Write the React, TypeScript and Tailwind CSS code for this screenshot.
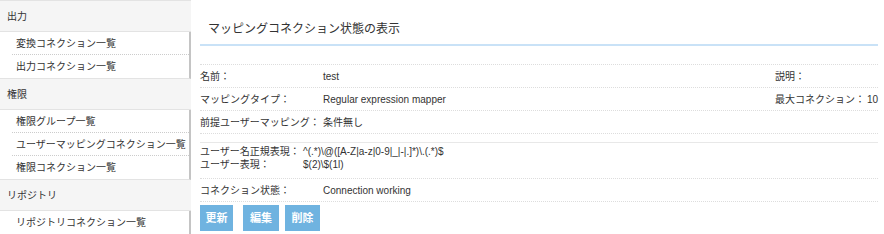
const font = { fontFamily: '"Liberation Sans", "Noto Sans CJK JP", sans-serif' };

const groups = [
    { title: '出力', items: ['変換コネクション一覧', '出力コネクション一覧'] },
    { title: '権限', items: ['権限グループ一覧', 'ユーザーマッピングコネクション一覧', '権限コネクション一覧'] },
    { title: 'リポジトリ', items: ['リポジトリコネクション一覧'] },
];

function Sidebar() {
    return (
        <div className="w-[191px] shrink-0 border-t border-[#e3e3e3]">
            {groups.map((g) => (
                <div key={g.title}>
                    <div className="flex h-[31px] items-center border-b border-[#e3e3e3] bg-[#f5f5f5] pl-[7px] text-[10px] text-[#333]">
                        {g.title}
                    </div>
                    <ul className="border-r-2 border-b border-r-[#c4c4c4] border-b-[#e3e3e3] bg-white pl-[12px]">
                        {g.items.map((it, i) => (
                            <li
                                key={it}
                                className={`flex h-[23px] items-center whitespace-nowrap pl-[4px] text-[10px] text-[#333] ${
                                    i < g.items.length - 1 ? 'border-b border-dotted border-[#ccc]' : ''
                                }`}
                            >
                                {it}
                            </li>
                        ))}
                    </ul>
                </div>
            ))}
        </div>
    );
}

function Row({ label, value, right, rightValue, labelW = 'w-[123px]' }: any) {
    return (
        <div className="flex h-[23px] items-center whitespace-nowrap border-t border-dotted border-[#ddd] text-[10px] text-[#333]">
            <div className={`${labelW} shrink-0`}>{label}</div>
            <div className="flex-1">{value}</div>
            {right !== undefined && (
                <div className="flex w-[103px] shrink-0">
                    <span className="w-[93px]">{right}</span>
                    <span>{rightValue}</span>
                </div>
            )}
        </div>
    );
}

export default function App() {
    return (
        <div className="flex h-[234px] w-[884px] overflow-hidden bg-white" style={font}>
            <Sidebar />
            <div className="flex-1 pl-[9px] pr-[6px]">
                <div className="border-b-2 border-[#c9e2f7] pl-[8px] pt-[21px] pb-[6px] text-[12px] leading-[17px] text-[#333]">
                    マッピングコネクション状態の表示
                </div>
                <div className="mt-[18px]">
                    <Row label="名前：" value="test" right="説明：" rightValue="" />
                    <Row label="マッピングタイプ：" value="Regular expression mapper" right="最大コネクション：" rightValue="10" />
                    <Row label="前提ユーザーマッピング：" value="条件無し" />
                </div>
                <div className="border-t border-dotted border-[#ddd]" />
                <div className="mt-[8px] whitespace-nowrap border-t border-[#e8e8e8] pt-[2px] pb-[7px] text-[10px] text-[#333]">
                    <div className="flex h-[13px] items-center">
                        <div className="w-[103px] shrink-0">ユーザー名正規表現：</div>
                        <div>^(.*)\@([A-Z|a-z|0-9|_|-|.]*)\.(.*)$</div>
                    </div>
                    <div className="flex h-[13px] items-center">
                        <div className="w-[103px] shrink-0">ユーザー表現：</div>
                        <div>$(2)\$(1l)</div>
                    </div>
                </div>
                <Row label="コネクション状態：" value="Connection working" />
                <div className="border-t border-dotted border-[#ddd]" />
                <div className="mt-[3px] flex gap-[8px]">
                    <button className="h-[26px] w-[33px] bg-[#6fb3e0] text-[11px] font-bold text-white">更新</button>
                    <button className="ml-[2px] h-[26px] w-[36px] bg-[#6fb3e0] text-[11px] font-bold text-white">編集</button>
                    <button className="-ml-[2px] h-[26px] w-[35px] bg-[#6fb3e0] text-[11px] font-bold text-white">削除</button>
                </div>
            </div>
        </div>
    );
}
